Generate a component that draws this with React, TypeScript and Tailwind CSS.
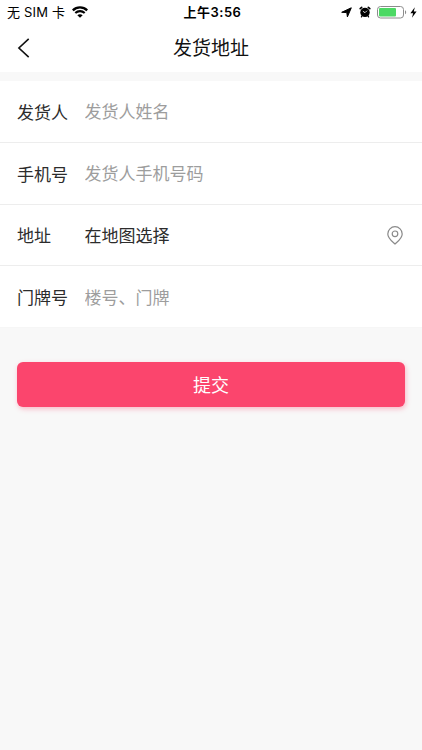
import { useState } from "react"

type Field = {
  id: string;
  label: string;
  placeholder: string;
  type: string;
}

const contactFields: Field[] = [
  { id: "name", label: "发货人", placeholder: "发货人姓名", type: "text" },
  { id: "phone", label: "手机号", placeholder: "发货人手机号码", type: "tel" },
]

const doorField: Field = { id: "door", label: "门牌号", placeholder: "楼号、门牌", type: "text" }

const WifiIcon = () => (
  <svg className="w-4 h-3" viewBox="0 0 16 12" fill="none" stroke="#000">
    <path d="M.8 4.4C4.8.4 11.2.4 15.2 4.4" strokeWidth="2.4" />
    <path d="M3.3 7.1c2.7-2.6 6.7-2.6 9.4 0" strokeWidth="2.1" />
    <path d="M8 11.8 5.3 9.2c1.6-1.4 3.8-1.4 5.4 0z" fill="#000" stroke="none" />
  </svg>
)

const LocationIcon = () => (
  <svg className="w-[11px] h-[11px]" viewBox="0 0 11 11" fill="#000" stroke="#000" strokeWidth="1" strokeLinejoin="round">
    <path d="M10.3.8 6.4 9.9 5.8 5.6.7 5.3z" />
  </svg>
)

const AlarmIcon = () => (
  <svg className="w-3 h-3" viewBox="0 0 12 12">
    <path d="M1.2 2.7 2.7 1.3M10.8 2.7 9.3 1.3" stroke="#000" strokeWidth="1.6" strokeLinecap="round" />
    <path d="M3 9.9 2.4 10.9M9 9.9l.6 1" stroke="#000" strokeWidth="1.2" strokeLinecap="round" />
    <circle cx="6" cy="6.4" r="4.7" fill="#000" />
    <path d="M3.9 5.2 6 6.7 8 4.7" fill="none" stroke="#fff" strokeWidth="0.8" />
  </svg>
)

const BatteryIcon = () => (
  <svg className="w-[30px] h-[13px]" viewBox="0 0 30 13">
    <rect x="0.5" y="0.5" width="26" height="11.5" rx="3" fill="#fff" stroke="#8c8c8c" />
    <rect x="2" y="2" width="17" height="8.5" rx="1" fill="#4cd964" />
    <path d="M28 4.2c1.6.7 1.6 3.4 0 4.1z" fill="#8c8c8c" />
  </svg>
)

const BoltIcon = () => (
  <svg className="w-[7px] h-[11px]" viewBox="0 0 7 11" fill="#000">
    <path d="M4.8.2.4 6.2h2.7L2 10.8l4.6-6.3H3.8z" />
  </svg>
)

const PinIcon = () => (
  <svg className="w-4 h-[19px]" viewBox="0 0 16 19" fill="none" stroke="#8a8a8a" strokeWidth="1.2">
    <path d="M8 18C5.5 15.6.8 12.3.8 7.9a7.2 7.2 0 0 1 14.4 0c0 4.4-4.7 7.7-7.2 10.1z" />
    <circle cx="8" cy="7.8" r="2.8" />
  </svg>
)

const StatusBar = () => {
  return (
    <div className="grid grid-cols-[1fr_auto_1fr] items-center h-6 pl-[7px] pr-[5px] text-black">
      <div className="flex items-center gap-[7px] text-[13px] leading-6 tracking-[0.2px]">
        <span>无 SIM 卡</span>
        <WifiIcon />
      </div>
      <span className="pl-px text-[13px] leading-6 font-semibold tracking-[0.5px]">上午3:56</span>
      <div className="flex items-center justify-end">
        <LocationIcon />
        <span className="ml-[7px] flex"><AlarmIcon /></span>
        <span className="ml-1.5 flex"><BatteryIcon /></span>
        <span className="ml-[3px] flex"><BoltIcon /></span>
      </div>
    </div>
  )
}

const FieldRow = ({ field }: { field: Field }) => {
  const [value, setValue] = useState("")

  return (
    <div className="flex items-center h-[61.75px] px-[17px] border-b border-[#ededed] last:border-[#f6f6f6]">
      <label htmlFor={field.id} className="w-[67.5px] shrink-0 pt-[3px]">{field.label}</label>
      <input
        id={field.id}
        type={field.type}
        value={value}
        onChange={(e) => setValue(e.target.value)}
        placeholder={field.placeholder}
        className="flex-1 min-w-0 pt-0.5 bg-transparent outline-none placeholder:text-[#9d9d9d]"
      />
    </div>
  )
}

export default function App() {
  return (
    <div className="min-h-[750px] bg-[#f8f8f8] text-[#2c2c2c] font-['Inter','Noto_Sans_CJK_SC',sans-serif]">
      <header className="h-[72px] bg-white">
        <StatusBar />
        <div className="grid grid-cols-[1fr_auto_1fr] items-center h-12 px-[17px]">
          <button type="button" aria-label="返回" className="w-6 h-6">
            <svg className="w-3.5 h-6" viewBox="0 0 14 24" fill="none" stroke="#111" strokeWidth="1.6">
              <path d="M11.7 2.8 1.9 12l9.8 9.2" />
            </svg>
          </button>
          <h1 className="pt-0.5 text-[19px] leading-7 text-[#111]">发货地址</h1>
        </div>
      </header>

      <form onSubmit={(e) => e.preventDefault()}>
        <div className="mt-[9px] bg-white text-[17px] leading-6">
          {contactFields.map((field) => (
            <FieldRow key={field.id} field={field} />
          ))}
          <div className="flex items-center h-[61.75px] px-[17px] border-b border-[#ededed]">
            <span className="w-[67.5px] pt-[3px]">地址</span>
            <button type="button" className="flex flex-1 items-center justify-between pt-px pr-0.5">
              <span className="pt-0.5">在地图选择</span>
              <PinIcon />
            </button>
          </div>
          <FieldRow field={doorField} />
        </div>

        <div className="px-[17px] pt-[34px]">
          <button
            type="submit"
            className="w-full h-[45px] pt-0.5 rounded-[6px] bg-[#fb456d] text-white text-[18px] shadow-[1px_2px_5px_rgba(251,69,109,0.35)]"
          >
            提交
          </button>
        </div>
      </form>
    </div>
  )
}
